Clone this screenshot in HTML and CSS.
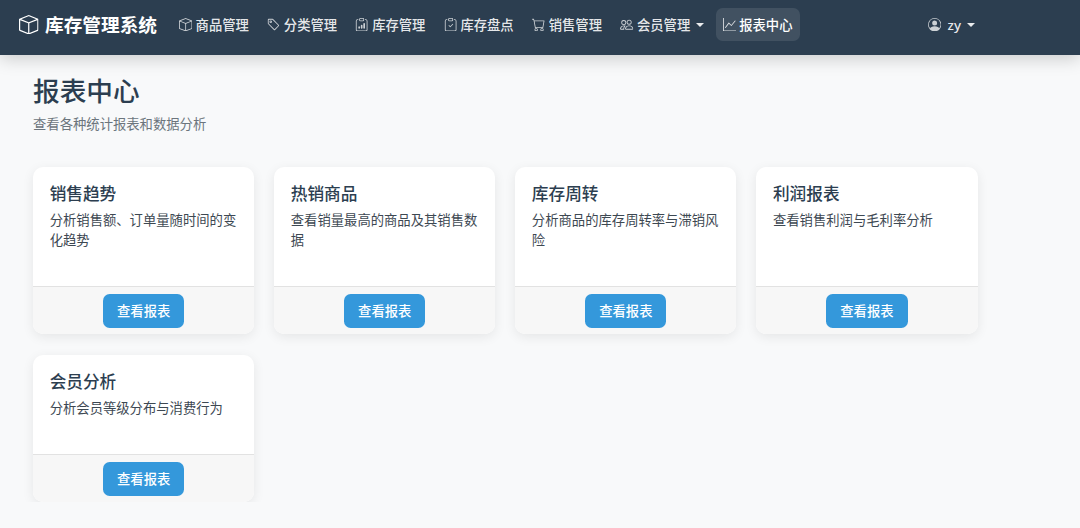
FILE: index.html
```html
<!DOCTYPE html>
<html lang="zh-CN">
<head>
<meta charset="utf-8">
<title>报表中心</title>
<link rel="stylesheet" href="styles.css">
</head>
<body>
<svg class="defs" aria-hidden="true">
  <symbol id="i-box" viewBox="0 0 16 16"><path d="M8.186 1.113a.5.5 0 0 0-.372 0L1.846 3.5 8 5.961 14.154 3.5 8.186 1.113zM15 4.239l-6.5 2.6v7.922l6.5-2.6V4.24zM7.5 14.762V6.838L1 4.239v7.925l6.5 2.6zM7.443.184a1.5 1.5 0 0 1 1.114 0l7.129 2.852A.5.5 0 0 1 16 3.5v8.662a1 1 0 0 1-.629.928l-7.185 2.874a.5.5 0 0 1-.372 0L.63 13.09a1 1 0 0 1-.63-.928V3.5a.5.5 0 0 1 .314-.464L7.443.184z"/></symbol>
  <symbol id="i-tag" viewBox="0 0 16 16"><path d="M6 4.5a1.5 1.5 0 1 1-3 0 1.5 1.5 0 0 1 3 0zm-1 0a.5.5 0 1 0-1 0 .5.5 0 0 0 1 0z"/><path d="M2 1h4.586a1 1 0 0 1 .707.293l7 7a1 1 0 0 1 0 1.414l-4.586 4.586a1 1 0 0 1-1.414 0l-7-7A1 1 0 0 1 1 6.586V2a1 1 0 0 1 1-1zm0 5.586 7 7L13.586 9l-7-7H2v4.586z"/></symbol>
  <symbol id="i-clip-data" viewBox="0 0 16 16"><path d="M4 11a1 1 0 1 1 2 0v1a1 1 0 1 1-2 0v-1zm6-4a1 1 0 1 1 2 0v5a1 1 0 1 1-2 0V7zM7 9a1 1 0 0 1 2 0v3a1 1 0 1 1-2 0V9z"/><path d="M4 1.5H3a2 2 0 0 0-2 2V14a2 2 0 0 0 2 2h10a2 2 0 0 0 2-2V3.5a2 2 0 0 0-2-2h-1v1h1a1 1 0 0 1 1 1V14a1 1 0 0 1-1 1H3a1 1 0 0 1-1-1V3.5a1 1 0 0 1 1-1h1v-1z"/><path d="M9.5 1a.5.5 0 0 1 .5.5v1a.5.5 0 0 1-.5.5h-3a.5.5 0 0 1-.5-.5v-1a.5.5 0 0 1 .5-.5h3zm-3-1A1.5 1.5 0 0 0 5 1.5v1A1.5 1.5 0 0 0 6.5 4h3A1.5 1.5 0 0 0 11 2.5v-1A1.5 1.5 0 0 0 9.5 0h-3z"/></symbol>
  <symbol id="i-clip-check" viewBox="0 0 16 16"><path d="M10.854 7.146a.5.5 0 0 1 0 .708l-3 3a.5.5 0 0 1-.708 0l-1.5-1.5a.5.5 0 1 1 .708-.708L7.5 9.793l2.646-2.647a.5.5 0 0 1 .708 0z"/><path d="M4 1.5H3a2 2 0 0 0-2 2V14a2 2 0 0 0 2 2h10a2 2 0 0 0 2-2V3.5a2 2 0 0 0-2-2h-1v1h1a1 1 0 0 1 1 1V14a1 1 0 0 1-1 1H3a1 1 0 0 1-1-1V3.5a1 1 0 0 1 1-1h1v-1z"/><path d="M9.5 1a.5.5 0 0 1 .5.5v1a.5.5 0 0 1-.5.5h-3a.5.5 0 0 1-.5-.5v-1a.5.5 0 0 1 .5-.5h3zm-3-1A1.5 1.5 0 0 0 5 1.5v1A1.5 1.5 0 0 0 6.5 4h3A1.5 1.5 0 0 0 11 2.5v-1A1.5 1.5 0 0 0 9.5 0h-3z"/></symbol>
  <symbol id="i-cart" viewBox="0 0 16 16"><path d="M0 1.5A.5.5 0 0 1 .5 1H2a.5.5 0 0 1 .485.379L2.89 3H14.5a.5.5 0 0 1 .491.592l-1.5 8A.5.5 0 0 1 13 12H4a.5.5 0 0 1-.491-.408L2.01 3.607 1.61 2H.5a.5.5 0 0 1-.5-.5zM3.102 4l1.313 7h8.17l1.313-7H3.102zM5 12a2 2 0 1 0 0 4 2 2 0 0 0 0-4zm7 0a2 2 0 1 0 0 4 2 2 0 0 0 0-4zm-7 1a1 1 0 1 1 0 2 1 1 0 0 1 0-2zm7 0a1 1 0 1 1 0 2 1 1 0 0 1 0-2z"/></symbol>
  <symbol id="i-people" viewBox="0 0 16 16"><path d="M15 14s1 0 1-1-1-4-5-4-5 3-5 4 1 1 1 1h8zm-7.978-1A.261.261 0 0 1 7 12.996c.001-.264.167-1.03.76-1.72C8.312 10.629 9.282 10 11 10c1.717 0 2.687.63 3.24 1.276.593.69.758 1.457.76 1.72l-.008.002a.274.274 0 0 1-.014.002H7.022zM11 7a2 2 0 1 0 0-4 2 2 0 0 0 0 4zm3-2a3 3 0 1 1-6 0 3 3 0 0 1 6 0zM6.936 9.28a5.88 5.88 0 0 0-1.23-.247A7.35 7.35 0 0 0 5 9c-4 0-5 3-5 4 0 .667.333 1 1 1h4.216A2.238 2.238 0 0 1 5 13c0-1.01.377-2.042 1.09-2.904.243-.294.526-.569.846-.816zM4.92 10A5.493 5.493 0 0 0 4 13H1c0-.26.164-1.03.76-1.724.545-.636 1.492-1.256 3.16-1.275zM1.5 5.5a3 3 0 1 1 6 0 3 3 0 0 1-6 0zm3-2a2 2 0 1 0 0 4 2 2 0 0 0 0-4z"/></symbol>
  <symbol id="i-graph" viewBox="0 0 16 16"><path d="M0 0h1v15h15v1H0V0Zm14.817 3.113a.5.5 0 0 1 .07.704l-4.5 5.5a.5.5 0 0 1-.74.037L7.06 6.767l-3.656 5.027a.5.5 0 0 1-.808-.588l4-5.5a.5.5 0 0 1 .758-.06l2.609 2.61 4.15-5.073a.5.5 0 0 1 .704-.07Z"/></symbol>
  <symbol id="i-person" viewBox="0 0 16 16"><path d="M11 6a3 3 0 1 1-6 0 3 3 0 0 1 6 0z"/><path fill-rule="evenodd" d="M0 8a8 8 0 1 1 16 0A8 8 0 0 1 0 8zm8-7a7 7 0 0 0-5.468 11.37C3.242 11.226 4.805 10 8 10s4.757 1.225 5.468 2.37A7 7 0 0 0 8 1z"/></symbol>
</svg>

<nav class="navbar">
  <a class="brand" href="#"><svg class="brand-icon"><use href="#i-box"/></svg><span>库存管理系统</span></a>
  <ul class="nav-list">
    <li><a class="nav-link" href="#"><svg class="icon"><use href="#i-box"/></svg>商品管理</a></li>
    <li><a class="nav-link" href="#"><svg class="icon"><use href="#i-tag"/></svg>分类管理</a></li>
    <li><a class="nav-link" href="#"><svg class="icon"><use href="#i-clip-data"/></svg>库存管理</a></li>
    <li><a class="nav-link" href="#"><svg class="icon"><use href="#i-clip-check"/></svg>库存盘点</a></li>
    <li><a class="nav-link" href="#"><svg class="icon"><use href="#i-cart"/></svg>销售管理</a></li>
    <li><a class="nav-link caret" href="#"><svg class="icon"><use href="#i-people"/></svg>会员管理</a></li>
    <li><a class="nav-link active" href="#"><svg class="icon"><use href="#i-graph"/></svg>报表中心</a></li>
  </ul>
  <a class="nav-link caret user" href="#"><svg class="icon user-icon"><use href="#i-person"/></svg>zy</a>
</nav>

<main class="content">
  <h1 class="page-title">报表中心</h1>
  <p class="page-sub">查看各种统计报表和数据分析</p>
  <div class="card-grid">
    <section class="card">
      <div class="card-body"><h2 class="card-title">销售趋势</h2><p class="card-text">分析销售额、订单量随时间的变化趋势</p></div>
      <div class="card-footer"><a class="btn" href="#">查看报表</a></div>
    </section>
    <section class="card">
      <div class="card-body"><h2 class="card-title">热销商品</h2><p class="card-text">查看销量最高的商品及其销售数据</p></div>
      <div class="card-footer"><a class="btn" href="#">查看报表</a></div>
    </section>
    <section class="card">
      <div class="card-body"><h2 class="card-title">库存周转</h2><p class="card-text">分析商品的库存周转率与滞销风险</p></div>
      <div class="card-footer"><a class="btn" href="#">查看报表</a></div>
    </section>
    <section class="card">
      <div class="card-body"><h2 class="card-title">利润报表</h2><p class="card-text">查看销售利润与毛利率分析</p></div>
      <div class="card-footer"><a class="btn" href="#">查看报表</a></div>
    </section>
    <section class="card">
      <div class="card-body"><h2 class="card-title">会员分析</h2><p class="card-text">分析会员等级分布与消费行为</p></div>
      <div class="card-footer"><a class="btn" href="#">查看报表</a></div>
    </section>
  </div>
</main>
</body>
</html>
```
FILE: styles.css
```css
* { box-sizing: border-box; }
html, body { margin: 0; padding: 0; }
body {
  background: #f8f9fa;
  color: #2c3e50;
  font-family: "Noto Sans", "Noto Sans CJK SC", sans-serif;
  font-size: 13.33px;
  line-height: 20px;
  overflow: hidden;
}
a { text-decoration: none; color: inherit; }
.defs { display: none; }

.navbar {
  height: 55px;
  background: #2c3e50;
  box-shadow: 0 4px 16px rgba(0, 0, 0, 0.18);
  display: flex;
  align-items: center;
  padding: 0 98px 6px 19px;
  color: rgba(255, 255, 255, 0.9);
  position: relative;
}
.brand {
  display: flex;
  align-items: center;
  gap: 6.5px;
  color: #fff;
  font-size: 18.67px;
  font-weight: 700;
}
.brand-icon { width: 19.5px; height: 19.5px; fill: currentColor; }
.nav-list {
  list-style: none;
  display: flex;
  gap: 4.3px;
  margin: 0 0 0 15px;
  padding: 0;
  flex: 1;
}
.nav-link {
  display: flex;
  align-items: center;
  height: 33px;
  padding: 0 7px;
  border-radius: 6.67px;
  font-weight: 500;
  white-space: nowrap;
}
.nav-link.active { background: rgba(255, 255, 255, 0.1); color: #fff; }
.icon { width: 13.33px; height: 13.33px; fill: currentColor; margin-right: 3.33px; flex: none; opacity: 0.85; }
.caret::after {
  content: "";
  margin-left: 6px;
  border-top: 4px solid currentColor;
  border-left: 4px solid transparent;
  border-right: 4px solid transparent;
}
.user-icon { margin-right: 6.5px; }

.content { padding: 20px 33px 0; }
.page-title {
  margin: 0;
  font-size: 26.67px;
  line-height: 32px;
  font-weight: 500;
}
.page-sub {
  margin: 7px 0 0;
  color: #6c757d;
}
.card-grid {
  display: grid;
  grid-template-columns: repeat(4, 221.3px);
  column-gap: 19.8px;
  row-gap: 20.67px;
  margin-top: 33px;
}
.card {
  height: 167.33px;
  background: #fff;
  border-radius: 10px;
  box-shadow: 0 3px 12px rgba(0, 0, 0, 0.08);
  overflow: hidden;
  display: flex;
  flex-direction: column;
}
.card:last-child { height: 147.33px; }
.card-body { flex: 1; padding: 17px 16.67px 0; }
.card-title {
  margin: 0 0 6px;
  font-size: 16.67px;
  line-height: 20px;
  font-weight: 500;
}
.card-text { margin: 0; color: #3d4852; }
.card-footer {
  height: 48.33px;
  background: #f7f7f7;
  border-top: 1px solid #e2e2e2;
  display: flex;
  justify-content: center;
  align-items: center;
}
.btn {
  display: block;
  height: 34px;
  line-height: 34px;
  padding: 0 14px;
  background: #3498db;
  color: #fff;
  border-radius: 6.67px;
  font-weight: 500;
}
```
